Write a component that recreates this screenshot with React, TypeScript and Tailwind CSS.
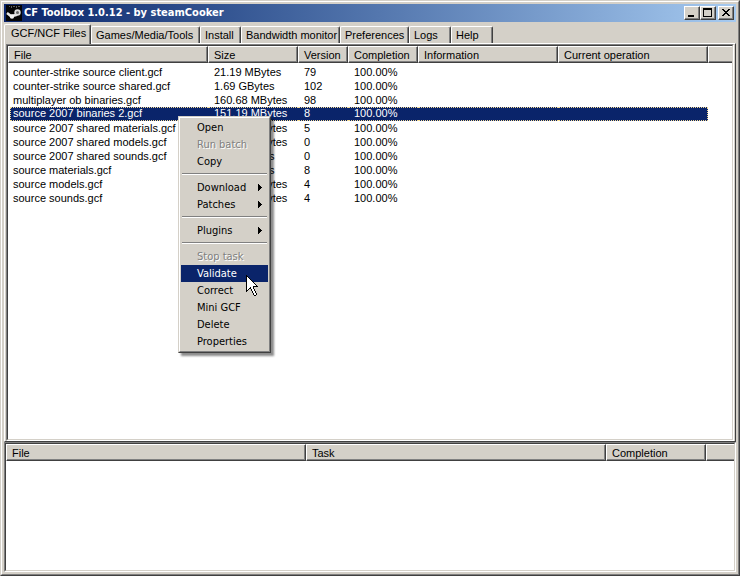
import { Fragment } from "react";
import type { ReactNode } from "react";

const raised =
  "border border-t-white border-l-white border-r-[#404040] border-b-[#404040] bg-[#d4d0c8] shadow-[inset_-1px_-1px_#808080]";
const raisedOpenEnd =
  "border-t border-b border-l border-t-white border-l-white border-b-[#404040] bg-[#d4d0c8] shadow-[inset_0_-1px_#808080]";

const sunken =
  "border border-t-[#808080] border-l-[#808080] border-r-white border-b-white";
const sunkenInner =
  "border border-t-[#404040] border-l-[#404040] border-r-[#d4d0c8] border-b-[#d4d0c8] bg-white";

const tabs = [
  { label: "Games/Media/Tools", width: "w-[109px]" },
  { label: "Install", width: "w-[41px]" },
  { label: "Bandwidth monitor", width: "w-[99px]" },
  { label: "Preferences", width: "w-[69px]" },
  { label: "Logs", width: "w-[42px]" },
  { label: "Help", width: "w-[42px]" },
];

const files = [
  ["counter-strike source client.gcf", "21.19 MBytes", "79"],
  ["counter-strike source shared.gcf", "1.69 GBytes", "102"],
  ["multiplayer ob binaries.gcf", "160.68 MBytes", "98"],
  ["source 2007 binaries 2.gcf", "151.19 MBytes", "8"],
  ["source 2007 shared materials.gcf", "271.22 MBytes", "5"],
  ["source 2007 shared models.gcf", "108.41 MBytes", "0"],
  ["source 2007 shared sounds.gcf", "1.02 GBytes", "0"],
  ["source materials.gcf", "1.12 GBytes", "8"],
  ["source models.gcf", "510.36 MBytes", "4"],
  ["source sounds.gcf", "402.75 MBytes", "4"],
];
const selectedFile = 3;

type MenuEntry = { label: string; disabled?: boolean; active?: boolean; sub?: boolean };
const menuGroups: MenuEntry[][] = [
  [{ label: "Open" }, { label: "Run batch", disabled: true }, { label: "Copy" }],
  [
    { label: "Download", sub: true },
    { label: "Patches", sub: true },
  ],
  [{ label: "Plugins", sub: true }],
  [
    { label: "Stop task", disabled: true },
    { label: "Validate", active: true },
    { label: "Correct" },
    { label: "Mini GCF" },
    { label: "Delete" },
    { label: "Properties" },
  ],
];

const cursorRows = [
  "X",
  "XX",
  "X.X",
  "X..X",
  "X...X",
  "X....X",
  "X.....X",
  "X......X",
  "X.......X",
  "X........X",
  "X.........X",
  "X......XXXXX",
  "X...X..X",
  "X..XX..X",
  "X.X  X..X",
  "XX   X..X",
  "X     X..X",
  "      X..X",
  "       X..X",
  "       X..X",
  "        XX",
];

function Logo() {
  return (
    <svg className="h-4 w-4 shrink-0" viewBox="0 0 16 16" aria-hidden="true">
      <rect width="16" height="16" fill="#050505" />
      <path d="M3 1h1v1H3zM5 1h1v2H5zM7 1h2v1H7zM10 1h1v2h-1zM12 1h2v1h-2z" fill="#5c5c5c" />
      <path d="M1 8l4 3 5-1 2-2" fill="none" stroke="#e8e8e8" strokeWidth="2.6" />
      <circle cx="6" cy="11.5" r="2.2" fill="#f2f2f2" />
      <circle cx="11.5" cy="7.5" r="3.2" fill="#dcdcdc" />
      <circle cx="11.5" cy="7.5" r="1.5" fill="#666" />
    </svg>
  );
}

function CaptionButton({ label, children }: { label: string; children: ReactNode }) {
  return (
    <button type="button" aria-label={label} className={`h-[14px] w-4 ${raised}`}>
      <svg className="block h-3 w-[14px]" viewBox="0 0 14 12" shapeRendering="crispEdges">
        {children}
      </svg>
    </button>
  );
}

function Th({ width, children }: { width?: string; children?: ReactNode }) {
  return (
    <th className={`p-0 font-normal ${width ?? ""}`}>
      <div
        className={`h-[17px] overflow-hidden pl-[5px] text-left leading-4 whitespace-nowrap ${
          width ? raised : raisedOpenEnd
        }`}
      >
        {children}
      </div>
    </th>
  );
}

function FileTable() {
  return (
    <table className="w-full table-fixed border-separate border-spacing-0">
      <thead>
        <tr>
          <Th width="w-[200px]">File</Th>
          <Th width="w-[90px]">Size</Th>
          <Th width="w-[50px]">Version</Th>
          <Th width="w-[70px]">Completion</Th>
          <Th width="w-[140px]">Information</Th>
          <Th width="w-[150px]">Current operation</Th>
          <Th />
        </tr>
      </thead>
      <tbody className="before:block before:h-0.5">
        {files.map(([name, size, version], i) => {
          const sel = i === selectedFile;
          const cell = `h-[14px] overflow-hidden whitespace-nowrap ${
            sel
              ? "border-y border-dotted border-[#f5db95] bg-[#0a246a] leading-[11px] text-white"
              : "leading-[14px]"
          }`;
          return (
            <tr key={name} aria-selected={sel}>
              <td className="p-0">
                <div className={`ml-0.5 ${cell} ${sel ? "border-l pl-0.5" : "pl-[3px]"}`}>{name}</div>
              </td>
              <td className="p-0">
                <div className={`pl-1.5 ${cell}`}>{size}</div>
              </td>
              <td className="p-0">
                <div className={`pl-1.5 ${cell}`}>{version}</div>
              </td>
              <td className="p-0">
                <div className={`pl-1.5 ${cell}`}>100.00%</div>
              </td>
              <td className="p-0">
                <div className={cell} />
              </td>
              <td className="p-0">
                <div className={`${cell} ${sel ? "border-r" : ""}`} />
              </td>
              <td className="p-0" />
            </tr>
          );
        })}
      </tbody>
    </table>
  );
}

function ContextMenu() {
  return (
    <div
      role="menu"
      className="absolute top-[115px] left-[177px] w-[93px] border border-t-[#d4d0c8] border-r-[#404040] border-b-[#404040] border-l-[#d4d0c8] bg-[#d4d0c8] font-['DejaVu_Sans_Condensed','DejaVu_Sans',sans-serif] text-[11px] shadow-[3px_3px_2px_rgba(0,0,0,0.45)]"
    >
      <div className="border border-t-white border-r-[#808080] border-b-[#808080] border-l-white p-px">
        {menuGroups.map((group, g) => (
          <Fragment key={g}>
            {g > 0 && (
              <div
                role="separator"
                className="mx-px mt-[3px] mb-1 h-0.5 border-t border-b border-t-[#808080] border-b-white"
              />
            )}
            {group.map((item) => (
              <button
                key={item.label}
                type="button"
                role="menuitem"
                disabled={item.disabled}
                className={`flex h-[17px] w-full items-center justify-between pr-1.5 pl-4 text-left leading-[17px] whitespace-nowrap ${
                  item.disabled
                    ? "text-[#808080] [text-shadow:1px_1px_#fff]"
                    : item.active
                      ? "bg-[#0a246a] text-white"
                      : "text-black"
                }`}
              >
                {item.label}
                {item.sub && (
                  <svg className="h-[7px] w-1" viewBox="0 0 4 7" shapeRendering="crispEdges">
                    <path d="M0 0h1v1h1v1h1v1h1v1H3v1H2v1H1v1H0z" />
                  </svg>
                )}
              </button>
            ))}
          </Fragment>
        ))}
      </div>
    </div>
  );
}

function Pointer() {
  return (
    <svg
      className="pointer-events-none absolute top-[274px] left-[245px] h-[21px] w-[13px]"
      viewBox="0 0 13 21"
      shapeRendering="crispEdges"
      aria-hidden="true"
    >
      {cursorRows.flatMap((row, y) =>
        [...row].map((c, x) =>
          c === " " ? null : (
            <rect key={`${x}-${y}`} x={x} y={y} width="1" height="1" fill={c === "X" ? "#000" : "#fff"} />
          ),
        ),
      )}
    </svg>
  );
}

export default function App() {
  return (
    <div className="relative h-screen cursor-default border border-t-[#d4d0c8] border-r-[#404040] border-b-[#404040] border-l-[#d4d0c8] bg-[#d4d0c8] font-['Liberation_Sans',Arial,sans-serif] text-[11px] text-black">
      <div className="flex h-full flex-col border border-t-white border-r-[#808080] border-b-[#808080] border-l-white p-0.5">
        <header className="flex h-[18px] shrink-0 items-center bg-linear-to-r from-[#0a246a] to-[#a6caf0] px-0.5">
          <Logo />
          <h1 className="ml-0.5 flex-1 font-['DejaVu_Sans_Condensed','DejaVu_Sans',sans-serif] text-[11px] leading-4 font-bold whitespace-nowrap text-white">
            CF Toolbox 1.0.12 - by steamCooker
          </h1>
          <div className="flex">
            <CaptionButton label="Minimize">
              <path d="M3 8h6v2H3z" />
            </CaptionButton>
            <CaptionButton label="Maximize">
              <path d="M2 1h9v9H2zM3 3v6h7V3z" fillRule="evenodd" />
            </CaptionButton>
          </div>
          <div className="ml-0.5 flex">
            <CaptionButton label="Close">
              <path d="M3 2h2v1h1v1h2V3h1V2h2v1h-1v1H9v1H8v1h1v1h1v1h1v1H9V8H8V7H6v1H5v1H3V8h1V7h1V6h1V5H5V4H4V3H3z" />
            </CaptionButton>
          </div>
        </header>

        <nav role="tablist" className="mt-0.5 flex h-[19px] shrink-0 items-end">
          <button
            type="button"
            role="tab"
            aria-selected="true"
            className="relative -mb-px h-5 w-[87px] self-start rounded-t-[2px] border border-b-0 border-t-white border-r-[#404040] border-l-white bg-[#d4d0c8] pl-1.5 text-left leading-[17px] whitespace-nowrap shadow-[inset_-1px_0_#808080]"
          >
            <span className="block h-[19px]">GCF/NCF Files</span>
          </button>
          {tabs.map((tab) => (
            <button
              key={tab.label}
              type="button"
              role="tab"
              aria-selected="false"
              className={`h-[17px] rounded-t-[2px] border border-b-0 border-t-white border-r-[#404040] border-l-white pl-1 text-left leading-4 whitespace-nowrap shadow-[inset_-1px_0_#808080] ${tab.width}`}
            >
              {tab.label}
            </button>
          ))}
        </nav>

        <main className="flex min-h-0 flex-1 flex-col border border-t-white border-r-[#404040] border-b-[#404040] border-l-white px-px">
          <div className={`flex min-h-0 flex-1 flex-col ${sunken}`}>
            <div className={`min-h-0 flex-1 overflow-hidden ${sunkenInner}`}>
              <FileTable />
            </div>
          </div>
        </main>

        <section aria-label="Tasks" className={`flex h-[130px] shrink-0 flex-col ${sunken}`}>
          <div className={`flex-1 overflow-hidden ${sunkenInner}`}>
            <table className="w-full table-fixed border-separate border-spacing-0">
              <thead>
                <tr>
                  <Th width="w-[300px]">File</Th>
                  <Th width="w-[300px]">Task</Th>
                  <Th width="w-[100px]">Completion</Th>
                  <Th />
                </tr>
              </thead>
            </table>
          </div>
        </section>
      </div>
      <ContextMenu />
      <Pointer />
    </div>
  );
}
